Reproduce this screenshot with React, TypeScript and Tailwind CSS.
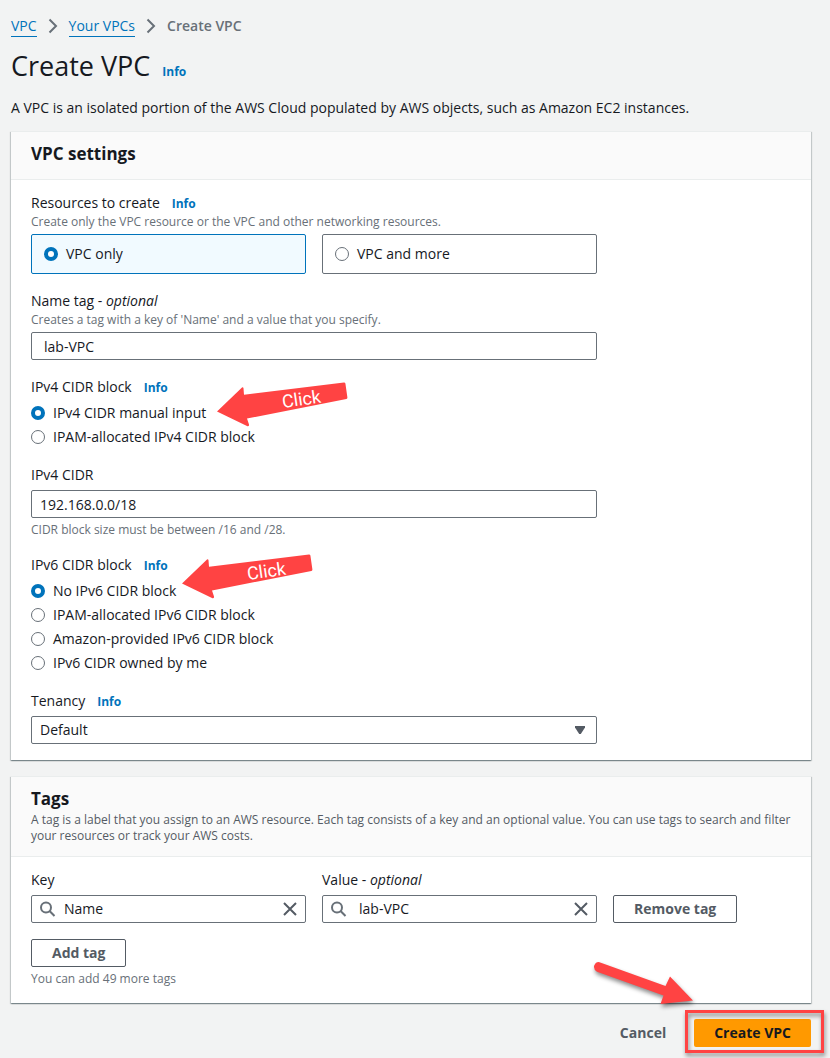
import { useState, type ReactNode } from "react";

function Info() {
  return (
    <a href="#info" className="ml-3 text-[12px] leading-none font-bold text-[#0073bb]">
      Info
    </a>
  );
}

function Chevron() {
  return (
    <svg width="10" height="16" viewBox="0 0 10 16" fill="none" stroke="#687078" strokeWidth="2" aria-hidden="true">
      <path d="M1.5 1.5 8 8l-6.5 6.5" />
    </svg>
  );
}

type RadioProps = { name: string; label: string; checked: boolean; onChange: () => void };

function RadioInput({ name, label, checked, onChange }: RadioProps) {
  return (
    <>
      <input
        type="radio"
        name={name}
        aria-label={label}
        checked={checked}
        onChange={onChange}
        className="size-[14px] shrink-0 appearance-none rounded-full border border-[#687078] bg-white checked:border-[4px] checked:border-[#0073bb]"
      />
      <span>{label}</span>
    </>
  );
}

function RadioList({ name, options, initial }: { name: string; options: string[]; initial: string }) {
  const [value, setValue] = useState(initial);
  return (
    <div className="mt-1 flex flex-col items-start gap-0.5">
      {options.map((option) => (
        <label key={option} className="flex items-center gap-2">
          <RadioInput name={name} label={option} checked={value === option} onChange={() => setValue(option)} />
        </label>
      ))}
    </div>
  );
}

function Tiles() {
  const options = ["VPC only", "VPC and more"];
  const [value, setValue] = useState(options[0]);
  return (
    <div className="mt-1 grid grid-cols-2 gap-4">
      {options.map((option) => (
        <label
          key={option}
          className="flex h-10 items-center gap-2 rounded-[2px] border border-[#687078] bg-white px-3 has-checked:border-[#0073bb] has-checked:bg-[#f1faff]"
        >
          <RadioInput name="resources" label={option} checked={value === option} onChange={() => setValue(option)} />
        </label>
      ))}
    </div>
  );
}

function Hint({ children }: { children: ReactNode }) {
  return <p className="text-[12px] leading-4 text-[#687078]">{children}</p>;
}

function Panel({ title, description, children }: { title: string; description?: string; children: ReactNode }) {
  return (
    <section className="border-t border-[#eaeded] bg-white shadow-[0_1px_1px_0_rgba(0,28,36,0.3),1px_1px_1px_0_rgba(0,28,36,0.15),-1px_1px_1px_0_rgba(0,28,36,0.15)]">
      <header className="border-b border-[#eaeded] bg-[#fafafa] px-5 pt-[11px] pb-3">
        <h2 className="mb-0.5 text-[17px] leading-[22px] font-bold">{title}</h2>
        {description && <p className="text-[12px] leading-4 text-[#545b64]">{description}</p>}
      </header>
      {children}
    </section>
  );
}

function ClickArrow() {
  return (
    <svg width="134" height="48" viewBox="0 0 134 48" aria-hidden="true">
      <path
        d="M2 31.5 27 7.5q1.2-.6 1.5.8l.5 6.5L129 2.5q1.2 0 1.4 1l2 14q0 1.2-1 1.5L32 38.5l2 6q.2 2-1.5 1.8z"
        fill="#ff4343"
      />
      <text
        x="68"
        y="28"
        fontSize="18"
        fill="#fff"
        fontFamily="Roboto, sans-serif"
        transform="rotate(-8 68 28)"
      >
        Click
      </text>
    </svg>
  );
}

function TagField({ id, label, optional, initial }: { id: string; label: string; optional?: boolean; initial: string }) {
  const [value, setValue] = useState(initial);
  return (
    <div className="max-w-[275px] flex-1">
      <label htmlFor={id} className="block">
        {label}
        {optional && (
          <>
            {" "}- <i>optional</i>
          </>
        )}
      </label>
      <div className="mt-1 flex h-7 items-center rounded-[2px] border border-[#687078] px-2">
        <svg width="16" height="16" viewBox="0 0 16 16" fill="none" stroke="#687078" strokeWidth="2" aria-hidden="true">
          <circle cx="6" cy="6.5" r="5" />
          <path d="m9.8 10.3 4.7 4.7" />
        </svg>
        <input
          id={id}
          value={value}
          onChange={(e) => setValue(e.target.value)}
          className={
            optional ? "ml-3 min-w-0 flex-1 outline-none" : "ml-2 min-w-0 flex-1 outline-none"
          }
        />
        <button type="button" aria-label={`Clear ${label}`} onClick={() => setValue("")}>
          <svg width="14" height="14" viewBox="0 0 14 14" fill="none" stroke="#545b64" strokeWidth="2" aria-hidden="true">
            <path d="m1 1 12 12M13 1 1 13" />
          </svg>
        </button>
      </div>
    </div>
  );
}

const fieldClass = "mt-1 block h-7 w-full rounded-[2px] border border-[#687078] bg-white";
const buttonClass = "h-7 rounded-[2px] border border-[#545b64] bg-white px-5 font-bold text-[#545b64]";

export default function App() {
  const [name, setName] = useState("lab-VPC");
  const [cidr, setCidr] = useState("192.168.0.0/18");
  return (
    <div className="min-h-screen bg-[#f2f3f3] pt-[15px] pr-[19px] pb-[11px] pl-[11px] font-['Open_Sans',sans-serif] text-[14px] leading-[22px] text-[#16191f]">
      <nav aria-label="Breadcrumb" className="flex items-center gap-[11px]">
        <a href="#vpc" className="border-b border-[#0073bb] leading-5 text-[#0073bb]">
          VPC
        </a>
        <Chevron />
        <a href="#vpcs" className="border-b border-[#0073bb] leading-5 text-[#0073bb]">
          Your VPCs
        </a>
        <Chevron />
        <span className="font-semibold text-[#687078]">Create VPC</span>
      </nav>
      <div className="mt-[11px] flex items-baseline">
        <h1 className="text-[27px] leading-9">Create VPC</h1>
        <Info />
      </div>
      <p className="mt-[13px] mb-3">
        A VPC is an isolated portion of the AWS Cloud populated by AWS objects, such as Amazon EC2 instances.
      </p>

      <form className="flex flex-col gap-4" onSubmit={(e) => e.preventDefault()}>
        <Panel title="VPC settings">
          <div className="px-5 pt-3 pb-4">
            <div className="flex max-w-[566px] flex-col gap-4">
              <fieldset>
                <legend>
                  Resources to create
                  <Info />
                </legend>
                <Hint>Create only the VPC resource or the VPC and other networking resources.</Hint>
                <Tiles />
              </fieldset>

              <div>
                <label htmlFor="name-tag" className="block">
                  Name tag - <i>optional</i>
                </label>
                <Hint>Creates a tag with a key of 'Name' and a value that you specify.</Hint>
                <input
                  id="name-tag"
                  value={name}
                  onChange={(e) => setName(e.target.value)}
                  className={`${fieldClass} px-3`}
                />
              </div>

              <fieldset className="relative">
                <legend>
                  IPv4 CIDR block
                  <Info />
                </legend>
                <RadioList
                  name="ipv4"
                  initial="IPv4 CIDR manual input"
                  options={["IPv4 CIDR manual input", "IPAM-allocated IPv4 CIDR block"]}
                />
                <div className="pointer-events-none absolute -top-[18px] left-[184px]">
                  <ClickArrow />
                </div>
              </fieldset>

              <div>
                <label htmlFor="cidr" className="block">
                  IPv4 CIDR
                </label>
                <input
                  id="cidr"
                  value={cidr}
                  onChange={(e) => setCidr(e.target.value)}
                  className={`${fieldClass} mb-1 px-2`}
                />
                <Hint>CIDR block size must be between /16 and /28.</Hint>
              </div>

              <fieldset className="relative">
                <legend>
                  IPv6 CIDR block
                  <Info />
                </legend>
                <RadioList
                  name="ipv6"
                  initial="No IPv6 CIDR block"
                  options={[
                    "No IPv6 CIDR block",
                    "IPAM-allocated IPv6 CIDR block",
                    "Amazon-provided IPv6 CIDR block",
                    "IPv6 CIDR owned by me",
                  ]}
                />
                <div className="pointer-events-none absolute -top-6 left-[149px]">
                  <ClickArrow />
                </div>
              </fieldset>

              <div>
                <label htmlFor="tenancy">Tenancy</label>
                <Info />
                <div className="relative">
                  <select id="tenancy" className={`${fieldClass} appearance-none px-2`}>
                    <option>Default</option>
                    <option>Dedicated</option>
                  </select>
                  <svg
                    width="10"
                    height="8"
                    viewBox="0 0 10 8"
                    className="pointer-events-none absolute top-2.5 right-3"
                    aria-hidden="true"
                  >
                    <path d="M0 0h10v1.5L5.8 8H4.2L0 1.5z" fill="#545b64" />
                  </svg>
                </div>
              </div>
            </div>
          </div>
        </Panel>

        <Panel
          title="Tags"
          description="A tag is a label that you assign to an AWS resource. Each tag consists of a key and an optional value. You can use tags to search and filter your resources or track your AWS costs."
        >
          <div className="px-5 pt-3 pb-4">
            <div className="mb-4 flex items-end gap-4">
              <TagField id="tag-key" label="Key" initial="Name" />
              <TagField id="tag-value" label="Value" optional initial="lab-VPC" />
              <button type="button" className={buttonClass}>
                Remove tag
              </button>
            </div>
            <button type="button" className={`${buttonClass} mb-1 block`}>
              Add tag
            </button>
            <Hint>You can add 49 more tags</Hint>
          </div>
        </Panel>

        <div className="flex justify-end gap-2">
          <button type="button" className="h-7 px-5 font-bold text-[#545b64]">
            Cancel
          </button>
          <div className="relative">
            <button type="submit" className="block h-7 rounded-[2px] bg-[#ff9900] px-5 font-bold text-[#16191f]">
              Create VPC
            </button>
            <div className="pointer-events-none absolute -top-[9px] -right-[13px] -bottom-1.5 -left-[9px] border-[3px] border-[#ff4343] drop-shadow-[1px_3px_2px_rgba(0,0,0,0.45)]" />
            <svg
              width="110"
              height="60"
              viewBox="0 0 110 60"
              className="pointer-events-none absolute -top-[62px] right-[111px] drop-shadow-[1px_3px_2px_rgba(0,0,0,0.45)]"
              aria-hidden="true"
            >
              <path
                d="M9.5 5.2 75.5 29l4.5-9.5L103 43.5 70.5 47l3-8.5L7 14.8Q3.2 12.5 4.2 8.5 6 4.5 9.5 5.2z"
                fill="#ff4343"
              />
            </svg>
          </div>
        </div>
      </form>
    </div>
  );
}
